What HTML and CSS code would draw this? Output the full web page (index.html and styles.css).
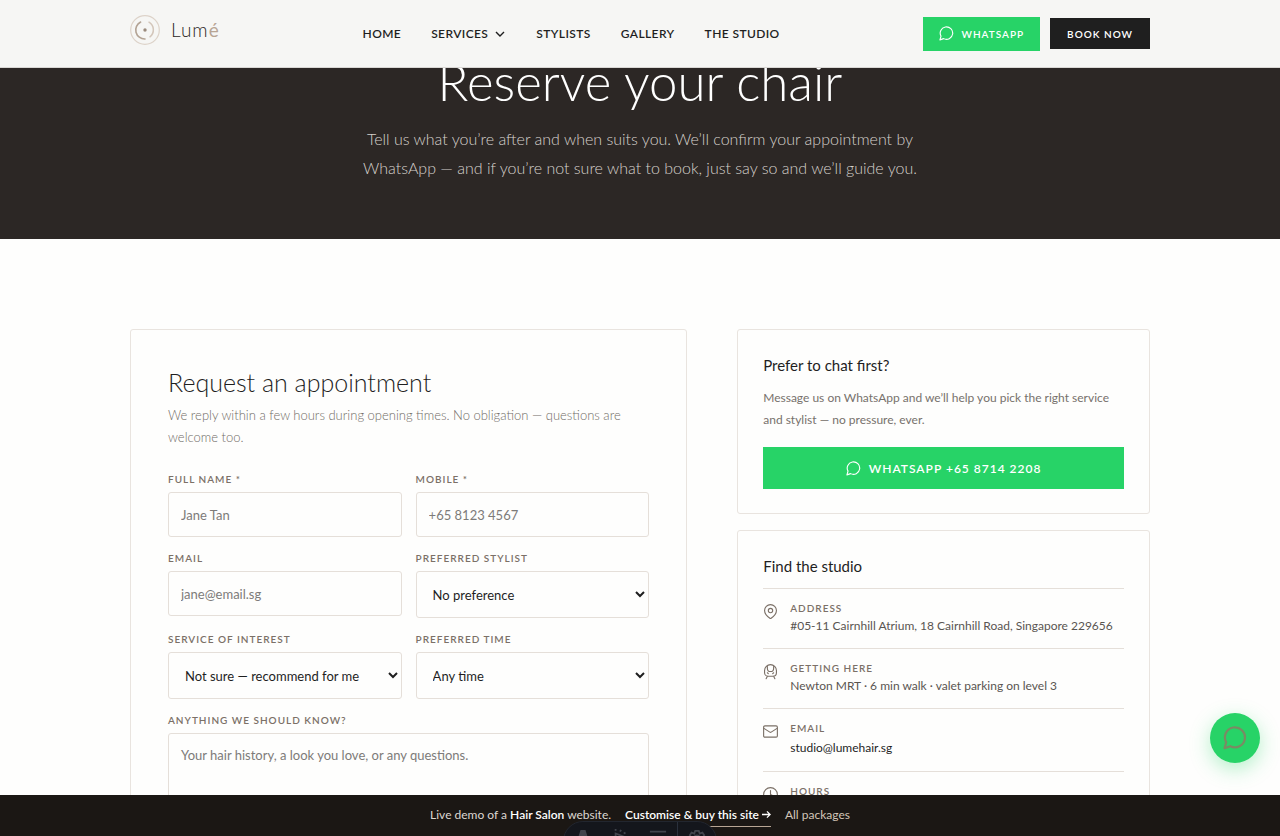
FILE: index.html
```html
<!DOCTYPE html>
<html lang="en">
<head>
<meta charset="utf-8">
<meta name="viewport" content="width=device-width, initial-scale=1">
<title>Lumé</title>
<link rel="stylesheet" href="styles.css">
</head>
<body>
<svg class="sprite" aria-hidden="true">
  <symbol id="bubble" viewBox="0 0 24 24"><path d="M7.300 20.200A10 10 0 1 0 3.200 16.200L1.500 22.200Z"/></symbol>
</svg>
<header class="site-header">
  <div class="container header-row">
    <a class="brand" href="#" aria-label="Lumé">
      <svg class="brand-mark" viewBox="0 0 30 30" fill="none" stroke-linecap="round">
        <circle cx="15" cy="15" r="14.3" stroke="#ddd3c9" stroke-width="1.2"/>
        <path d="M10.600 7a9 9 0 0 0 4.400 17" stroke="#b3a394" stroke-width="1.6"/>
        <path d="M19 7.200a8.900 8.900 0 0 1 1 14.600" stroke="#d3c6ba" stroke-width="1.500"/>
        <circle cx="15" cy="15" r="1.700" fill="#9a8a7c"/>
      </svg>
      <span class="brand-name">Lum<span class="accent">é</span></span>
    </a>
    <nav class="nav">
      <a href="#">Home</a>
      <a href="#">Services <svg class="chevron" viewBox="0 0 12 12"><path d="M2 4l4 4 4-4"/></svg></a>
      <a href="#">Stylists</a>
      <a href="#">Gallery</a>
      <a href="#">The Studio</a>
    </nav>
    <div class="actions">
      <a class="btn btn-green btn-small" href="#"><svg class="icon"><use href="#bubble"/></svg>WhatsApp</a>
      <a class="btn btn-dark" href="#">Book now</a>
    </div>
  </div>
</header>

<section class="hero">
  <h1>Reserve your chair</h1>
  <p>Tell us what you’re after and when suits you. We’ll confirm your appointment by WhatsApp — and if you’re not sure what to book, just say so and we’ll guide you.</p>
</section>

<main class="container columns">
  <form class="card form-card">
    <h2>Request an appointment</h2>
    <p class="note">We reply within a few hours during opening times. No obligation — questions are welcome too.</p>
    <div class="fields">
      <div class="field"><label for="name">Full name *</label><input id="name" type="text" placeholder="Jane Tan"></div>
      <div class="field"><label for="mobile">Mobile *</label><input id="mobile" type="tel" placeholder="+65 8123 4567"></div>
      <div class="field"><label for="email">Email</label><input id="email" type="email" placeholder="jane@email.sg"></div>
      <div class="field"><label for="stylist">Preferred stylist</label><select id="stylist"><option>No preference</option></select></div>
      <div class="field"><label for="service">Service of interest</label><select id="service"><option>Not sure — recommend for me</option></select></div>
      <div class="field"><label for="time">Preferred time</label><select id="time"><option>Any time</option></select></div>
      <div class="field wide"><label for="notes">Anything we should know?</label><textarea id="notes" rows="4" placeholder="Your hair history, a look you love, or any questions."></textarea></div>
    </div>
  </form>

  <div class="side">
    <section class="card side-card">
      <h3>Prefer to chat first?</h3>
      <p class="chat-text">Message us on WhatsApp and we’ll help you pick the right service and stylist — no pressure, ever.</p>
      <a class="btn btn-green btn-wide" href="#"><svg class="icon"><use href="#bubble"/></svg>WhatsApp +65 8714 2208</a>
    </section>
    <section class="card side-card">
      <h3>Find the studio</h3>
      <dl class="info">
        <div class="info-row">
          <svg class="icon" viewBox="0 0 24 24"><path d="M21.500 10.500c0 5.500-5.800 10.500-8.500 12.400a1.700 1.700 0 0 1-2 0C8.300 21 2.500 16 2.500 10.500a9.500 9.500 0 0 1 19 0"/><circle cx="12" cy="10.500" r="3.500"/></svg>
          <div><dt>Address</dt><dd>#05-11 Cairnhill Atrium, 18 Cairnhill Road, Singapore 229656</dd></div>
        </div>
        <div class="info-row">
          <svg class="icon" viewBox="0 0 24 24"><path d="M7 2.500V7a5 5 0 0 0 10 0V2.500M8.500 15.500l-1.500-1.500M15.500 15.500l1.500-1.500M8 19.500c-3.200 0-5.500-2.300-5.500-5.500v-3.500a9.500 9.500 0 0 1 19 0V14c0 3.200-2.300 5.500-5.500 5.500ZM7 19.500l-2 4M17 19.500l2 4"/></svg>
          <div><dt>Getting here</dt><dd>Newton MRT · 6 min walk · valet parking on level 3</dd></div>
        </div>
        <div class="info-row">
          <svg class="icon" viewBox="0 0 24 24"><rect x="1" y="3" width="22" height="18" rx="2"/><path d="M1.500 7l9.400 6a2 2 0 0 0 2.200 0l9.400-6"/></svg>
          <div><dt>Email</dt><dd><a href="#">studio@lumehair.sg</a></dd></div>
        </div>
        <div class="info-row">
          <svg class="icon" viewBox="0 0 24 24"><circle cx="12" cy="12" r="11"/><path d="M12 5.500V12l4 2"/></svg>
          <div><dt>Hours</dt></div>
        </div>
      </dl>
    </section>
  </div>
</main>

<a class="chat-fab" href="#" aria-label="WhatsApp"><svg class="icon"><use href="#bubble"/></svg></a>

<div class="demo-bar">
  <span>Live demo of a <b>Hair Salon</b> website.</span>
  <a class="demo-buy" href="#">Customise &amp; buy this site <svg class="arrow" viewBox="0 0 10 10"><path d="M0 5h9M5.500 1.500L9 5 5.500 8.500"/></svg></a>
  <a class="demo-all" href="#">All packages</a>
</div>
<div class="dev-pill" aria-hidden="true">
  <div class="pill-item"><svg viewBox="0 0 20 20"><path class="solid" d="M8 2h4l5 16h-4l-3-6-3 6H3z"/></svg></div>
  <div class="pill-item"><svg viewBox="0 0 20 20"><path d="M4 16V5l13 5-6 2-2 6M4 2V0M9 3l1-2M13 5l2-1"/></svg></div>
  <div class="pill-item"><svg viewBox="0 0 20 20"><path d="M1 3h18M4 9h14"/></svg></div>
  <div class="pill-item last"><svg viewBox="0 0 20 20"><path d="M8 2h4l1 3 3-1 2 3-2 3 2 3-2 3-3-1-1 3H8l-1-3-3 1-2-3 2-3-2-3 2-3 3 1z"/><circle cx="10" cy="10" r="3"/></svg></div>
</div>
</body>
</html>
```
FILE: styles.css
```css
* { box-sizing: border-box; }
html { scrollbar-width: none; }
body {
  margin: 0;
  background: #fefefd;
  color: #1f1f1f;
  font-family: Lato, "Open Sans", sans-serif;
  font-size: 14px;
}
a { color: inherit; text-decoration: none; }
h1, h2, h3, p, dl, dd { margin: 0; }
.sprite { position: absolute; width: 0; height: 0; }
.icon { width: 15px; height: 15px; flex: none; overflow: visible; fill: none; stroke: currentColor; stroke-width: 1.8; stroke-linecap: round; stroke-linejoin: round; }
.container { width: 100%; max-width: 1060px; margin: 0 auto; padding: 0 20px; }

.site-header { position: fixed; top: 0; left: 0; right: 0; z-index: 5; height: 68px; background: #f6f6f4; border-bottom: 1px solid #d9d7d4; }
.header-row { height: 100%; display: flex; justify-content: space-between; align-items: center; }
.brand { display: flex; align-items: center; gap: 11px; padding-bottom: 8px; }
.brand-mark { width: 30px; height: 30px; }
.brand-name { font-size: 19px; line-height: 30px; font-weight: 300; letter-spacing: 1px; color: #2b2725; }
.accent { color: #b8a594; font-weight: 400; }
.nav { display: flex; gap: 30px; font-size: 12px; font-weight: 600; text-transform: uppercase; letter-spacing: 0.4px; }
.nav a { display: flex; align-items: center; gap: 6px; }
.chevron { width: 12px; height: 12px; fill: none; stroke: currentColor; stroke-width: 1.4; }
.actions { display: flex; align-items: center; gap: 10px; }
.btn { display: flex; align-items: center; justify-content: center; gap: 8px; font-size: 10px; font-weight: 600; text-transform: uppercase; letter-spacing: 1px; color: #fff; }
.btn-green { background: #27d367; }
.btn-small { height: 34px; padding: 0 16px; }
.btn-dark { height: 31px; padding: 0 17px; background: #1f1f1f; }

.hero { background: #2c2725; color: #fff; text-align: center; padding: 48px 20px 57px; }
.hero h1 { font-size: 51px; line-height: 68px; font-weight: 300; }
.hero p { max-width: 580px; margin: 8px auto 0; font-size: 16px; line-height: 29px; font-weight: 300; color: #d6d1cc; }

.columns { display: grid; grid-template-columns: 1.35fr 1fr; gap: 50px; align-items: start; padding-top: 90px; }
.card { border: 1px solid #e9e4df; border-radius: 3px; background: #fefefd; }
.form-card { padding: 35px 37px; }
.form-card h2 { font-size: 25px; line-height: 34px; font-weight: 300; }
.note { margin: 5px 0 24px; line-height: 22px; font-size: 13px; font-weight: 300; color: #716c66; }
.fields { display: grid; grid-template-columns: 1fr 1fr; gap: 14px; }
.field { display: flex; flex-direction: column; gap: 6px; min-width: 0; }
.wide { grid-column: 1 / -1; }
.field label, dt { font-size: 10px; line-height: 14px; font-weight: 600; text-transform: uppercase; letter-spacing: 1px; color: #7b7067; }
input, select, textarea { width: 100%; height: 45px; padding: 0 12px; border: 1px solid #e5dfd9; border-radius: 3px; background: #fefefd; font: inherit; font-size: 13px; color: #1f1f1f; }
select { height: 47px; }
textarea { height: 110px; padding: 13px 12px; resize: none; }
input::placeholder, textarea::placeholder { color: #7d7b79; }

.side { display: grid; gap: 16px; }
.side-card { padding: 24px 25px; }
.side-card h3 { font-size: 15px; line-height: 22px; font-weight: 400; }
.chat-text { margin: 11px 0 16px; font-size: 12px; line-height: 22px; color: #77716c; }
.btn-wide { height: 42px; font-size: 12px; }
.info { margin-top: 11px; }
.info-row { display: flex; gap: 12px; padding: 12px 0; border-top: 1px solid #e5dfd9; color: #7b7067; }
.info-row .icon { margin-top: 3px; }
dd { font-size: 12px; line-height: 21px; color: #5a5551; }
dd a { display: inline-block; padding: 2px 0 1px; color: #1f1f1f; }

.chat-fab { position: fixed; right: 20px; bottom: 73px; z-index: 4; width: 50px; height: 50px; border-radius: 50%; display: grid; place-items: center; background: #27d367; color: #7b8a64; box-shadow: 0 6px 20px rgba(39, 211, 103, 0.35); }
.chat-fab .icon { width: 24px; height: 24px; stroke-width: 2.2; }

.demo-bar { position: fixed; left: 0; right: 0; bottom: 0; z-index: 6; height: 41px; display: flex; align-items: center; justify-content: center; gap: 14px; padding-bottom: 2px; background: #1b1714; color: #ddd8d2; font-size: 12px; }
.demo-bar b, .demo-buy { color: #fff; font-weight: 600; }
.demo-buy { padding: 4px 0; border-bottom: 1px solid #b8a594; }
.arrow { width: 9px; height: 9px; fill: none; stroke: currentColor; stroke-width: 1.4; }
.demo-all { color: #d3c6b8; }
.dev-pill { position: fixed; left: 50%; bottom: -25px; z-index: 7; transform: translateX(-50%); width: 154px; height: 40px; display: flex; border: 1px solid #22262f; border-radius: 20px; background: #14161c; overflow: hidden; }
.pill-item { flex: 1; display: flex; justify-content: center; padding-top: 7px; }
.pill-item svg { width: 18px; height: 18px; fill: none; stroke: #41444c; stroke-width: 2; }
.pill-item .solid { fill: #41444c; }
.last { border-left: 1px solid #2a303c; }
```
